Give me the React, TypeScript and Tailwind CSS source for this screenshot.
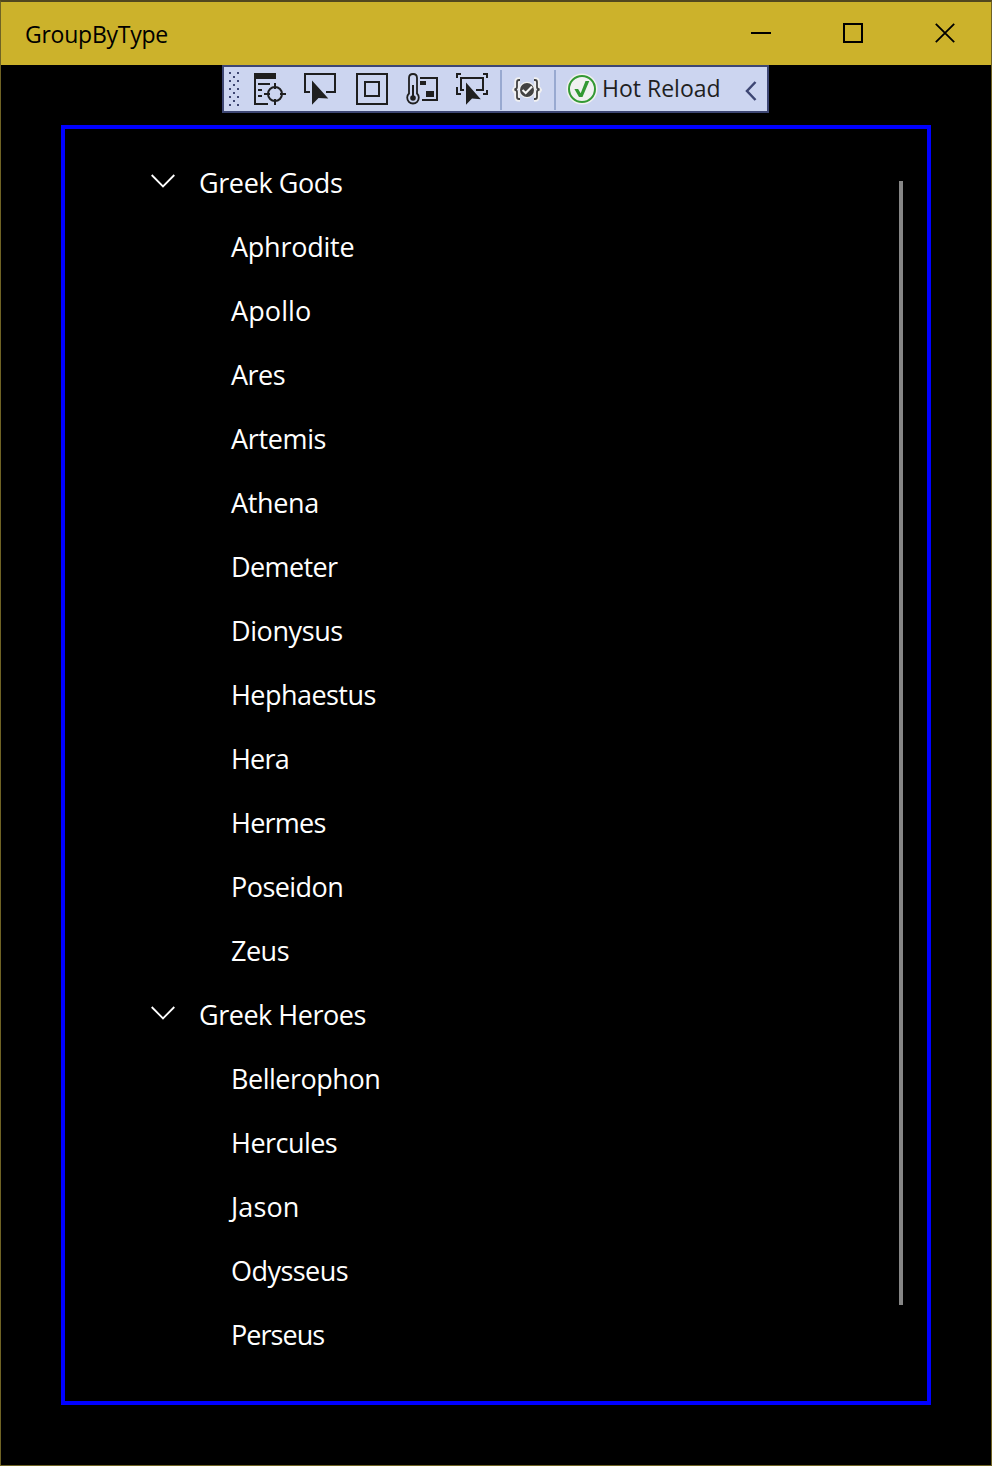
type Item = { name: string; tracking: string };
type Group = Item & { items: Item[] };

const groups: Group[] = [
  {
    name: "Greek Gods",
    tracking: "tracking-[-0.4px]",
    items: [
      { name: "Aphrodite", tracking: "tracking-[-0.25px]" },
      { name: "Apollo", tracking: "tracking-[0.1px]" },
      { name: "Ares", tracking: "tracking-[-0.5px]" },
      { name: "Artemis", tracking: "tracking-[-0.35px]" },
      { name: "Athena", tracking: "tracking-[-0.35px]" },
      { name: "Demeter", tracking: "tracking-[-0.6px]" },
      { name: "Dionysus", tracking: "tracking-[-0.4px]" },
      { name: "Hephaestus", tracking: "tracking-[-0.55px]" },
      { name: "Hera", tracking: "tracking-[-0.8px]" },
      { name: "Hermes", tracking: "tracking-[-0.75px]" },
      { name: "Poseidon", tracking: "tracking-[-0.55px]" },
      { name: "Zeus", tracking: "tracking-[-0.5px]" },
    ],
  },
  {
    name: "Greek Heroes",
    tracking: "tracking-[-0.47px]",
    items: [
      { name: "Bellerophon", tracking: "tracking-[-0.48px]" },
      { name: "Hercules", tracking: "tracking-[-0.53px]" },
      { name: "Jason", tracking: "tracking-[0.1px]" },
      { name: "Odysseus", tracking: "tracking-[-0.55px]" },
      { name: "Perseus", tracking: "tracking-[-0.95px]" },
    ],
  },
];

const gripDots = [0, 1, 2, 3, 4, 5, 6, 7, 8].flatMap((r) =>
  (r % 2 === 0 ? [0, 8] : [4]).map((x) => ({ x, y: r * 4 })),
);

function TitleBar() {
  return (
    <header className="flex h-[63px] shrink-0 items-start justify-between bg-[#ccb22b] pl-6 pr-9 text-black">
      <span className="pt-4 text-[23px] leading-8 tracking-[-0.25px]">GroupByType</span>
      <div className="flex gap-[72px] pt-[21px]">
        <svg width="20" height="20"><path d="M0 10H20" stroke="currentColor" strokeWidth="2" /></svg>
        <svg width="20" height="20"><path d="M1 1H19V19H1Z" fill="none" stroke="currentColor" strokeWidth="2" /></svg>
        <svg width="20" height="20"><path d="M.8 .8L19.2 19.2M19.2 .8L.8 19.2" stroke="currentColor" strokeWidth="1.8" /></svg>
      </div>
    </header>
  );
}

function DebugToolbar() {
  return (
    <div className="ml-[221px] flex h-12 w-[547px] shrink-0 items-start border-2 border-[#3d4673] bg-[#ccd5f0] text-[#1f1f1f]">
      <svg className="ml-[5px] mt-[5px] shrink-0" width="10" height="34" fill="#3d4673">
        {gripDots.map((d) => <rect key={`${d.x}-${d.y}`} x={d.x} y={d.y} width="2" height="2" />)}
      </svg>
      <svg className="ml-[15px] mt-1.5 shrink-0" width="32" height="34" fill="none" stroke="currentColor" strokeWidth="2">
        <path d="M1 0V31H14M4 11H16M4 17H8M4 23H8" />
        <path d="M0 3H22" strokeWidth="6" />
        <circle cx="21" cy="21" r="7" />
        <path d="M10 21H16M26 21H32M21 10V16M21 26V32" />
      </svg>
      <svg className="ml-[18px] mt-1.5 shrink-0" width="32" height="34">
        <path d="M6 19H1V1H31V19H22" fill="none" stroke="currentColor" strokeWidth="2" />
        <path d="M8 7.5L24.3 25.5L14.5 25L8 31.8Z" fill="currentColor" />
      </svg>
      <svg className="ml-5 mt-1.5 shrink-0" width="32" height="34" fill="none" stroke="currentColor" strokeWidth="2">
        <path d="M1 1H31V31H1ZM9 9H23V23H9Z" />
      </svg>
      <svg className="ml-[18px] mt-1.5 shrink-0" width="32" height="34" fill="none" stroke="currentColor" strokeWidth="2">
        <path d="M3 20.5V5Q3 1 7 1T11 5V20.5A5.8 5.8 0 1 1 3 20.5Z" strokeWidth="1.8" />
        <path d="M7 12V25M14 5H31V27H16" />
        <circle cx="7" cy="25" r="2.8" fill="currentColor" stroke="none" />
        <path d="M14 8H20V12H14ZM20 18H28V24H20Z" fill="currentColor" stroke="none" />
      </svg>
      <svg className="ml-[18px] mt-1.5 shrink-0" width="32" height="34">
        <path d="M5 1H1V5M27 1H31V5M31 17V21H27M5 21H1V14M8 17H5V5H27V17H20" fill="none" stroke="currentColor" strokeWidth="2" />
        <path d="M10 9.5L24.8 26.2L16 25.5L10 31.8Z" fill="currentColor" />
      </svg>
      <span className="ml-3 mt-[3px] h-10 w-0.5 shrink-0 bg-[#98a9d0]" />
      <svg className="ml-2.5 mt-2.5 shrink-0" width="30" height="26" fill="none">
        <g stroke="#f1f1f1" strokeWidth="5.5">
          <path d="M8 3H7Q5 3 5 5V10L3 13L5 16V20Q5 22 7 22H8M22 3H23Q25 3 25 5V10L27 13L25 16V20Q25 22 23 22H22" />
        </g>
        <circle cx="15" cy="13" r="8.2" fill="#f1f1f1" />
        <path d="M8 3H7Q5 3 5 5V10Q5 12 2.5 12.5Q5 13 5 15V20Q5 22 7 22H8M22 3H23Q25 3 25 5V10Q25 12 27.5 12.5Q25 13 25 15V20Q25 22 23 22H22" stroke="#424242" strokeWidth="1.8" />
        <circle cx="15" cy="13" r="7" fill="#424242" />
        <path d="M10.5 13L13.7 16L20 9.5" stroke="#f5f5f5" strokeWidth="2.1" />
      </svg>
      <span className="ml-3 mt-[3px] h-10 w-0.5 shrink-0 bg-[#98a9d0]" />
      <svg className="ml-2.5 mt-1.5 shrink-0" width="32" height="32">
        <circle cx="16" cy="16" r="15.5" fill="#f1f1f1" />
        <circle cx="16" cy="16" r="13" fill="none" stroke="#339933" strokeWidth="2" />
        <path d="M8.4 16H12.1L14.7 20.2L19.5 8H23.3L16.5 24H13Z" fill="#339933" />
      </svg>
      <span className="ml-1 w-[120px] shrink-0 whitespace-nowrap pt-[5px] text-[23px] leading-8">Hot Reload</span>
      <svg className="ml-[22px] mt-[14px] shrink-0" width="14" height="20" fill="none" stroke="#3d4673" strokeWidth="2.5">
        <path d="M11.5 1L3 10L11.5 19" />
      </svg>
    </div>
  );
}

function TreeGroup({ group }: { group: Group }) {
  return (
    <li>
      <div className="flex h-16 items-center">
        <svg className="mb-[5px] mr-6 shrink-0" width="24" height="14" fill="none" stroke="white" strokeWidth="1.8">
          <path d="M.7 1L12 12.4L23.3 1" />
        </svg>
        <span className={group.tracking}>{group.name}</span>
      </div>
      <ul className="pl-20">
        {group.items.map((item) => (
          <li key={item.name} className={`flex h-16 items-center ${item.tracking}`}>{item.name}</li>
        ))}
      </ul>
    </li>
  );
}

export default function App() {
  return (
    <div className="flex h-[1466px] w-[992px] flex-col border border-t-2 border-[#6f6324] border-t-[#51471f] bg-black font-['Open_Sans',sans-serif]">
      <TitleBar />
      <DebugToolbar />
      <main className="mx-[60px] mt-3 flex h-[1280px] shrink-0 justify-between border-4 border-[#0000ff] pl-[86px] pr-6">
        <ul className="pt-[22px] text-[27px] leading-9 text-white">
          {groups.map((group) => <TreeGroup key={group.name} group={group} />)}
        </ul>
        <div className="mt-[52px] h-[1124px] w-1 bg-[#868686]" />
      </main>
    </div>
  );
}
